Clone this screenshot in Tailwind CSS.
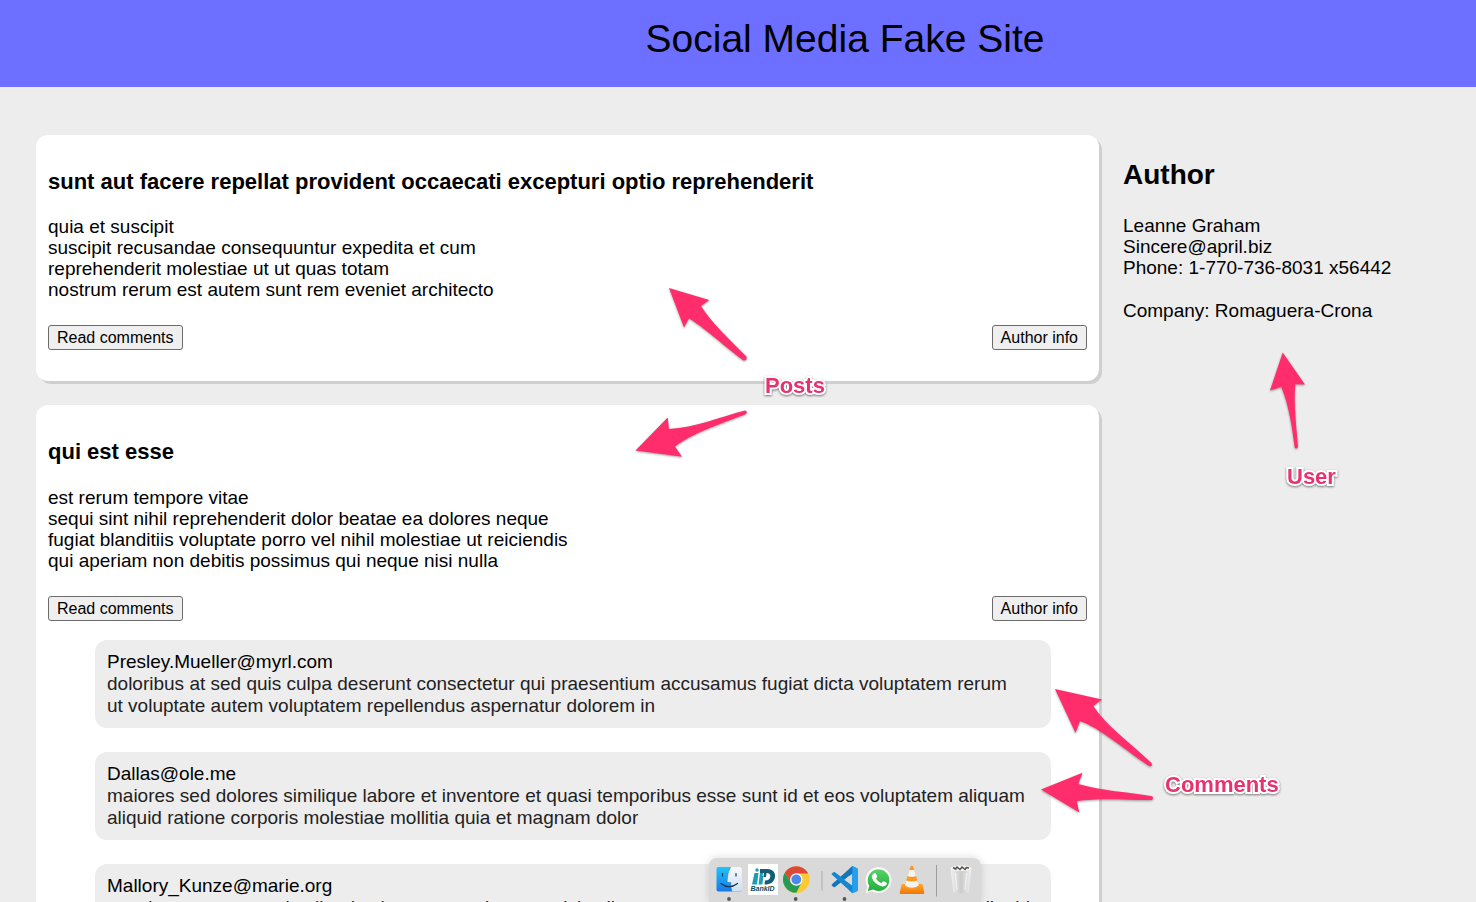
<!DOCTYPE html>
<html lang="en">
<head>
<meta charset="utf-8">
<meta name="viewport" content="width=device-width, initial-scale=1">
<title>Social Media Fake Site</title>
<script src="https://cdn.jsdelivr.net/npm/@tailwindcss/browser@4"></script>
</head>
<body class="relative h-screen overflow-hidden bg-[#ededed] font-['Liberation_Sans',Arial,sans-serif] text-[19px] leading-[21px] text-black">
<header class="flex justify-center bg-[#6c6fff] pt-4 pb-[25px] pl-[214px]">
  <h1 class="text-[39px] leading-[46px]">Social Media Fake Site</h1>
</header>
<div class="flex items-start gap-6 pt-12 pl-9">
  <main class="flex w-[74%] max-w-[1063px] shrink-0 flex-col gap-6">
    <article class="rounded-xl bg-white px-3 pt-[34px] pb-[31px] shadow-[3px_3px_0_#cfcfcf]">
      <h2 class="text-[22px] leading-[26px] font-bold">sunt aut facere repellat provident occaecati excepturi optio reprehenderit</h2>
      <p class="mt-[21px]">quia et suscipit<br>suscipit recusandae consequuntur expedita et cum<br>reprehenderit molestiae ut ut quas totam<br>nostrum rerum est autem sunt rem eveniet architecto</p>
      <div class="mt-[25px] flex justify-between">
        <button class="rounded-[3px] border border-[#6b6b6b] bg-[#efefef] px-2 text-[16px] leading-[23px]">Read comments</button>
        <button class="rounded-[3px] border border-[#6b6b6b] bg-[#efefef] px-2 text-[16px] leading-[23px]">Author info</button>
      </div>
    </article>
    <article class="rounded-xl bg-white px-3 pt-[34px] pb-[31px] shadow-[3px_3px_0_#cfcfcf]">
      <h2 class="text-[22px] leading-[26px] font-bold">qui est esse</h2>
      <p class="mt-[22px]">est rerum tempore vitae<br>sequi sint nihil reprehenderit dolor beatae ea dolores neque<br>fugiat blanditiis voluptate porro vel nihil molestiae ut reiciendis<br>qui aperiam non debitis possimus qui neque nisi nulla</p>
      <div class="mt-[25px] flex justify-between">
        <button class="rounded-[3px] border border-[#6b6b6b] bg-[#efefef] px-2 text-[16px] leading-[23px]">Read comments</button>
        <button class="rounded-[3px] border border-[#6b6b6b] bg-[#efefef] px-2 text-[16px] leading-[23px]">Author info</button>
      </div>
      <ul class="mt-[19px] mr-9 ml-[47px] flex flex-col gap-6 leading-[22px]">
        <li class="rounded-xl bg-[#ededed] px-3 py-[11px]"><p>Presley.Mueller@myrl.com</p><p class="text-[#222]">doloribus at sed quis culpa deserunt consectetur qui praesentium accusamus fugiat dicta voluptatem rerum<br>ut voluptate autem voluptatem repellendus aspernatur dolorem in</p></li>
        <li class="rounded-xl bg-[#ededed] px-3 py-[11px]"><p>Dallas@ole.me</p><p class="text-[#222]">maiores sed dolores similique labore et inventore et quasi temporibus esse sunt id et eos voluptatem aliquam<br>aliquid ratione corporis molestiae mollitia quia et magnam dolor</p></li>
        <li class="rounded-xl bg-[#ededed] px-3 py-[11px]"><p>Mallory_Kunze@marie.org</p><p class="text-[#222]">ut voluptatem corrupti velit ad voluptatem maiores et nisi velit vero accusamus maiores voluptates quia aliquid<br>ullam eaque</p></li>
      </ul>
    </article>
  </main>
  <aside class="pt-[23px]">
    <h2 class="text-[28px] leading-[34px] font-bold">Author</h2>
    <p class="mt-[23px]">Leanne Graham<br>Sincere@april.biz<br>Phone: 1-770-736-8031 x56442</p>
    <p class="mt-[22px]">Company: Romaguera-Crona</p>
  </aside>
</div>

<!-- Annotation arrows and labels -->
<svg class="pointer-events-none absolute top-0 left-0 drop-shadow-[0_1px_1px_#00000059]" width="1476" height="902" viewBox="0 0 1476 902" fill="#ff2d6c" aria-hidden="true">
  <path d="M669 288L709.3 300L701 306C711 322 729 339 746.500 356.500Q747.500 360.500 743.500 360.500C728 349 702 326 689 318.500L684 327.500Z"/>
  <path d="M635.500 450.500L667.700 417.500L669 429C695 427.500 720 417 745 410.500Q748 411.500 746 414C720 424 691 434 675 446.500L682 456.800Z"/>
  <path d="M1055 689L1102 699.500L1093.300 706C1106 726 1131 743 1151.500 763Q1153 766.500 1149.500 766.300C1129 753 1099 727 1080 721.300L1075.500 733Z"/>
  <path d="M1041 789.500L1082.500 772.800L1078.300 784C1102 791 1128 792 1152 796.300Q1154 798 1152 799.900C1126 800 1101 797.500 1076.700 801L1079.300 812.500Z"/>
  <path d="M1282.700 352.500L1305 384.500L1295.300 384.300C1293.500 405 1296.500 427 1298 447Q1296.500 449.500 1294.700 447.500C1292 427 1289 406 1281.300 387L1270 390.500Z"/>
</svg>
<span class="absolute top-[373px] left-[765px] text-[22px] leading-[26px] font-bold text-[#e8326e] drop-shadow-[0_1px_1px_#00000080] [-webkit-text-stroke:4px_white] [paint-order:stroke_fill]">Posts</span>
<span class="absolute top-[464px] left-[1287px] text-[22px] leading-[26px] font-bold text-[#e8326e] drop-shadow-[0_1px_1px_#00000080] [-webkit-text-stroke:4px_white] [paint-order:stroke_fill]">User</span>
<span class="absolute top-[772px] left-[1165px] text-[22px] leading-[26px] font-bold text-[#e8326e] drop-shadow-[0_1px_1px_#00000080] [-webkit-text-stroke:4px_white] [paint-order:stroke_fill]">Comments</span>

<!-- Dock -->
<div class="absolute top-[858px] left-[709px] h-11 w-[272px] rounded-t-lg bg-[#d9d9d9] shadow-[0_0_8px_#00000026]">
  <svg width="272" height="44" viewBox="709 858 272 44" aria-hidden="true">
    <defs>
      <linearGradient id="finder" x1="0" y1="0" x2="0" y2="1"><stop stop-color="#20c5fa"/><stop offset="1" stop-color="#1778e8"/></linearGradient>
      <linearGradient id="face" x1="0" y1="0" x2="0" y2="1"><stop stop-color="#f5f8fb"/><stop offset="1" stop-color="#cfe0f2"/></linearGradient>
      <linearGradient id="wa" x1="0" y1="0" x2="0" y2="1"><stop stop-color="#55d266"/><stop offset="1" stop-color="#24ae3b"/></linearGradient>
      <linearGradient id="cone" x1="0" y1="0" x2="0" y2="1"><stop stop-color="#ffa52d"/><stop offset="1" stop-color="#ee7708"/></linearGradient>
      <linearGradient id="bin" x1="0" y1="0" x2="1" y2="0"><stop stop-color="#f3f3f3"/><stop offset=".5" stop-color="#cbcbcb"/><stop offset="1" stop-color="#f0f0f0"/></linearGradient>
    </defs>
    <!-- Finder -->
    <rect x="716.500" y="867" width="25.500" height="24.500" rx="2" fill="url(#finder)"/>
    <path d="M730.500 867H740Q742 867 742 869V889.500Q742 891.500 740 891.500H731.800Q730.500 887 730.700 882.500H727Q727 873 730.500 867Z" fill="url(#face)"/>
    <path d="M730.500 867Q727 873 727 882.500H730.700Q730.500 887 731.800 891.500" fill="none" stroke="#1665a8" stroke-width=".5"/>
    <path d="M722.500 873.500V876M736 873.500V876M721 883.500Q729 890 737.500 883.500" fill="none" stroke="#17324c" stroke-width="1.200" stroke-linecap="round"/>
    <!-- BankID -->
    <rect x="748" y="864" width="30" height="31" fill="#fff"/>
    <path d="M754.500 873H758.500L757 884.500H752ZM760.500 876H763.500L762.300 884.500H758.500L760 873H763L762.600 876Z" fill="#1d9cb3"/>
    <path d="M760 869H767C773 869 775.500 872.500 775 877C774.300 882 770.500 884.500 764.500 884.500L765 880.500C768.500 880.500 770 879 770.300 876.500C770.500 874 769 873 766.500 873L766 877H763.500L764 873H760Z" fill="#115e75"/>
    <circle cx="757" cy="870" r="1.700" fill="#1d9cb3"/>
    <text x="750.500" y="891" font-family="Liberation Sans, Arial, sans-serif" font-size="7" font-weight="700" font-style="italic" fill="#134c5b">BankID</text>
    <!-- Chrome -->
    <circle cx="796.300" cy="879.500" r="13.300" fill="#fbc934"/>
    <path d="M784.780 872.850A13.300 13.300 0 0 0 796.300 892.800L801.500 882.500L796.300 879.500L791 882.500Z" fill="#289b52"/>
    <path d="M784.780 872.850A13.300 13.300 0 0 1 807.820 872.850L808 873.500H796.300L791 882.500Z" fill="#dc4938"/>
    <circle cx="796.300" cy="879.500" r="6.200" fill="#fff"/>
    <circle cx="796.300" cy="879.500" r="4.900" fill="#4a87ef"/>
    <path d="M822 871V890.500" stroke="#ababab"/>
    <!-- VS Code -->
    <path d="M852.500 866L858 868.800V890.700L852.500 893.300L849 890V869Z" fill="#26a0ed"/>
    <path d="M852.500 866L832 884.200Q831.300 885 832 885.700L833.500 887.100Q834.200 887.600 835 887L853 873Z" fill="#1475bb"/>
    <path d="M852.500 893.300L832 874.800Q831.300 874 832 873.300L833.500 872.200Q834.200 871.700 835 872.200L853 886Z" fill="#1786d1"/>
    <path d="M852.500 866L858 868.800V890.700L852.500 893.300Z" fill="#26a0ed"/>
    <path d="M852 874V885.500L844.500 879.700Z" fill="#d9d9d9"/>
    <!-- WhatsApp -->
    <path d="M865.500 893.200L867.300 886.500A13 13 0 1 1 872.300 891.400Z" fill="#f8f8f8"/>
    <path d="M867.800 891L869.300 885.800A10.800 10.800 0 1 1 873.200 889.600Z" fill="url(#wa)"/>
    <path d="M873.500 873.500Q875 872.300 876 873.800L877.200 876.600Q877.300 877.300 875.900 878.600Q877.800 882 881.300 883.200L882.900 881.400Q883.500 881 884.200 881.400L886.600 882.700Q887.200 883.200 886.500 884.800Q884.500 887 881.500 886.200Q874.500 884.200 872 878Q871.500 875.300 873.500 873.500Z" fill="#fff"/>
    <!-- VLC -->
    <path d="M902.500 884H921.500Q922.500 884 922.800 885L924.300 892.500Q924.500 894 923 894H901Q899.500 894 899.700 892.500L901.500 885Q901.700 884 902.500 884Z" fill="url(#cone)"/>
    <path d="M910.500 866.500Q911.800 865 913.100 866.500L919.300 887Q911.800 892 904.300 887Z" fill="#ff971c"/>
    <path d="M909.400 870H914.200L916 876Q911.800 878 907.600 876Z" fill="#f4f4f4"/>
    <path d="M906.300 880.500Q911.800 882.500 917.300 880.500L918.800 885.500Q911.800 890 904.800 885.500Z" fill="#f4f4f4"/>
    <path d="M936.500 865V896.500" stroke="#9d9d9d"/>
    <!-- Trash -->
    <path d="M950.500 868H971.500L968.800 891.500Q968.500 893.500 961 893.500Q953.500 893.500 953.200 891.500Z" fill="url(#bin)"/>
    <ellipse cx="961" cy="868.300" rx="10.500" ry="2.800" fill="#f7f7f7"/>
    <path d="M953 867.500L955.500 869L957 867L960 869.500L962 867L965 869.500L966.500 867.500L969 868" fill="none" stroke="#4e4e4e" stroke-width="1.500"/>
    <path d="M956 869.500L957.500 868.500M964 868.500L966.500 867" stroke="#b7874c"/>
    <path d="M955.500 873L957 890M966.500 873L965 890" fill="none" stroke="#fff" stroke-opacity=".7"/>
    <g fill="#555"><circle cx="729" cy="899" r="1.900"/><circle cx="795.700" cy="899" r="1.900"/><circle cx="844.500" cy="899" r="1.900"/></g>
  </svg>
</div>
</body>
</html>
